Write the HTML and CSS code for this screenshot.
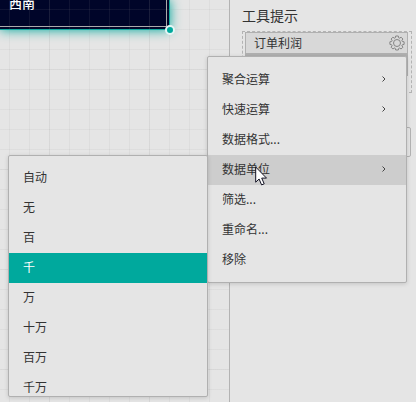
FILE: index.html
```html
<!DOCTYPE html>
<html lang="zh-CN">
<head>
	<title>工具提示</title>
	<meta charset="utf-8">
	<link rel="stylesheet" href="styles.css">
</head>
<body>
	<div class="designer">
		<main class="canvas">
			<div class="widget">
				<div class="widget_cell">西南</div>
				<span class="handle"></span>
			</div>
		</main>
		<aside class="panel">
			<h2 class="panel_title">工具提示</h2>
			<div class="drop_zone">
				<div class="field">
					<span class="field_name">订单利润</span>
					<button class="gear" type="button" aria-label="设置">
						<svg width="16" height="16" viewBox="0 0 16 16">
							<path d="M6.300 2.800 6.700 1h2.600l.4 1.800 .9.400 1.500-1 1.800 1.800-1 1.500.4.900 1.800.4v2.600l-1.800.4-.4.900 1 1.500-1.800 1.800-1.500-1-.9.400-.4 1.600H6.700l-.4-1.600-.9-.4-1.500 1-1.800-1.800 1-1.500-.4-.9L.9 9.400V6.800l1.800-.4.400-.9-1-1.500 1.800-1.800 1.500 1z"/>
							<circle cx="8" cy="8" r="3.500"/>
						</svg>
					</button>
				</div>
				<div class="field field_next"></div>
			</div>
			<div class="panel_box"></div>
		</aside>
	</div>

	<div class="menu">
		<button class="menu_item" type="button">聚合运算<svg class="arrow" viewBox="0 0 6 8"><path d="M1.500 1.500 4 4 1.500 6.500"/></svg></button>
		<button class="menu_item" type="button">快速运算<svg class="arrow" viewBox="0 0 6 8"><path d="M1.500 1.500 4 4 1.500 6.500"/></svg></button>
		<button class="menu_item" type="button">数据格式...</button>
		<button class="menu_item open" type="button">数据单位<svg class="arrow" viewBox="0 0 6 8"><path d="M1.500 1.500 4 4 1.500 6.500"/></svg></button>
		<button class="menu_item" type="button">筛选...</button>
		<button class="menu_item" type="button">重命名...</button>
		<button class="menu_item" type="button">移除</button>

		<div class="submenu">
			<button class="menu_item" type="button">自动</button>
			<button class="menu_item" type="button">无</button>
			<button class="menu_item" type="button">百</button>
			<button class="menu_item active" type="button">千</button>
			<button class="menu_item" type="button">万</button>
			<button class="menu_item" type="button">十万</button>
			<button class="menu_item" type="button">百万</button>
			<button class="menu_item" type="button">千万</button>
		</div>

		<svg class="pointer" width="13" height="20" viewBox="0 0 13 20">
			<path d="M.7 1v15.200l3.400-3.200 2.500 5.900 2.600-1.100-2.500-5.700h4.800z"/>
		</svg>
	</div>
</body>
</html>
```

FILE: styles.css
```css
*{
	box-sizing:border-box;
	margin:0;
	padding:0;
}
body{
	background:#e5e5e5;
	color:#333;
	font-family:"Noto Sans CJK SC","Noto Sans",sans-serif;
	font-size:12px;
	overflow:hidden;
}
button{
	border:none;
	background:none;
	color:inherit;
	font:inherit;
}
.designer{
	display:flex;
	min-height:100vh;
}
/* 20px grid with a stronger line every 100px */
.canvas{
	position:relative;
	flex:1;
	overflow:hidden;
}
.canvas::after{
	content:"";
	position:absolute;
	inset:0;
	pointer-events:none;
	background-image:
		linear-gradient(90deg,rgba(150,150,150,.08) 1px,transparent 1px),
		linear-gradient(rgba(150,150,150,.08) 1px,transparent 1px),
		linear-gradient(90deg,rgba(150,150,150,.1) 1px,transparent 1px),
		linear-gradient(rgba(150,150,150,.1) 1px,transparent 1px);
	background-size:100px 100px,100px 100px,20px 20px,20px 20px;
	background-position:49px 69px,49px 69px,9px 9px,9px 9px;
}
.widget{
	position:relative;
	width:170px;
	height:30px;
	padding:0 2px 2px 0;
	background:#000529;
	border:solid #00a99d;
	border-width:0 1px 1px 0;
	box-shadow:0 0 12px #00a99d;
}
.widget_cell{
	height:27px;
	padding-left:9px;
	border:solid #aaa;
	border-width:0 1px 1px 0;
	color:#fff;
	font-size:13px;
	font-weight:500;
	line-height:6px;
}
.handle{
	position:absolute;
	z-index:1;
	right:-6px;
	bottom:-6px;
	width:10px;
	height:10px;
	border:2px solid #e5f6f5;
	border-radius:50%;
	background:#00a99d;
}
.panel{
	width:187px;
	padding:5px 4px 0 12px;
	border-left:1px solid #b3b3b3;
}
.panel_title{
	font-size:14px;
	font-weight:normal;
	line-height:20px;
	margin-bottom:6px;
}
.drop_zone{
	height:62px;
	padding:0 3px 0 2px;
	border:1px dashed #b3b3b3;
}
.field{
	display:flex;
	align-items:center;
	justify-content:space-between;
	height:22px;
	padding:0 2px 0 8px;
	border:1px solid #b0b0b0;
	background:#d8d8d8;
}
.field_name{
	padding-bottom:2px;
}
.field_next{
	border-width:2px;
}
.gear{
	width:16px;
	height:16px;
}
.gear svg{
	display:block;
	fill:none;
	stroke:#858585;
	stroke-linejoin:round;
}
.panel_box{
	height:30px;
	margin:34px 1px 0 0;
	border:1px solid #b3b3b3;
	border-radius:2px;
}
.menu,.submenu{
	position:absolute;
	width:200px;
	border:1px solid #b0b0b0;
	border-radius:2px;
	background:#e5e5e5;
	box-shadow:0 1px 4px rgba(0,0,0,.15);
}
.menu{
	top:56px;
	right:9px;
	padding:8px 0 7px;
}
.submenu{
	top:98px;
	right:198px;
	height:242px;
	padding-top:7px;
	overflow:hidden;
}
.menu_item{
	display:flex;
	align-items:center;
	justify-content:space-between;
	width:100%;
	height:30px;
	padding:0 19px 3px 14px;
	text-align:left;
}
.open{
	background:#cdcdcd;
}
.active{
	background:#00a99d;
	color:#fff;
}
.arrow{
	width:6px;
	height:8px;
	fill:none;
	stroke:#444;
}
.pointer{
	position:absolute;
	top:109px;
	left:47px;
	fill:#fff;
	stroke:#112;
}
```
